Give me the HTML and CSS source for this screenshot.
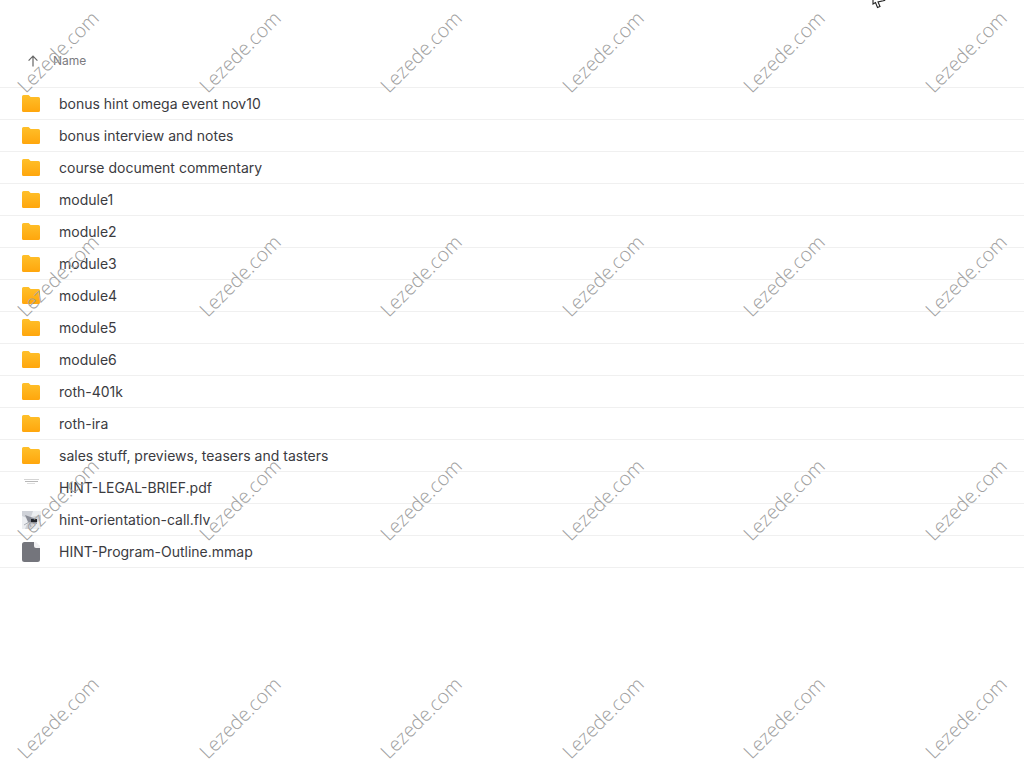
FILE: index.html
```html
<!DOCTYPE html>
<html lang="en">

<head>
    <meta charset="UTF-8">
    <meta name="viewport" content="width=device-width, initial-scale=1.0">
    <title>Files</title>
    <link rel="stylesheet" href="styles.css">
</head>

<body>
    <svg width="0" height="0" class="defs">
        <defs>
            <linearGradient id="fold" x1="0" y1="0" x2="0" y2="1">
                <stop offset="0" stop-color="#ffc02a" />
                <stop offset="1" stop-color="#ffa60d" />
            </linearGradient>
            <symbol id="folder" viewBox="0 0 18 17">
                <path d="M1.5 0H6.6L8.6 2H16.5A1.5 1.5 0 0 1 18 3.5V15.5A1.5 1.5 0 0 1 16.5 17H1.5A1.5 1.5 0 0 1 0 15.5V1.5A1.5 1.5 0 0 1 1.5 0Z" fill="url(#fold)" />
            </symbol>
        </defs>
    </svg>

    <div class="list">
        <div class="head">
            <svg class="sort" width="12" height="12" viewBox="0 0 12 12">
                <path d="M6 11.5V1.5M1.6 5.6L6 1.2L10.4 5.6" fill="none" stroke="#666" stroke-width="1.2" />
            </svg>
            <span>Name</span>
        </div>
        <div class="row"><svg class="ico"><use href="#folder" /></svg><span>bonus hint omega event nov10</span></div>
        <div class="row"><svg class="ico"><use href="#folder" /></svg><span>bonus interview and notes</span></div>
        <div class="row"><svg class="ico"><use href="#folder" /></svg><span>course document commentary</span></div>
        <div class="row"><svg class="ico"><use href="#folder" /></svg><span>module1</span></div>
        <div class="row"><svg class="ico"><use href="#folder" /></svg><span>module2</span></div>
        <div class="row"><svg class="ico"><use href="#folder" /></svg><span>module3</span></div>
        <div class="row"><svg class="ico"><use href="#folder" /></svg><span>module4</span></div>
        <div class="row"><svg class="ico"><use href="#folder" /></svg><span>module5</span></div>
        <div class="row"><svg class="ico"><use href="#folder" /></svg><span>module6</span></div>
        <div class="row"><svg class="ico"><use href="#folder" /></svg><span>roth-401k</span></div>
        <div class="row"><svg class="ico"><use href="#folder" /></svg><span>roth-ira</span></div>
        <div class="row"><svg class="ico"><use href="#folder" /></svg><span>sales stuff, previews, teasers and tasters</span></div>
        <div class="row">
            <svg class="ico" viewBox="0 0 18 17">
                <path d="M2 0.500H17" stroke="#d4d4d4" stroke-width="1" />
                <path d="M3 2.500H16" stroke="#b8b8b8" stroke-width="1" />
                <path d="M5 4.500H13" stroke="#dedede" stroke-width="1" />
            </svg>
            <span>HINT-LEGAL-BRIEF.pdf</span>
        </div>
        <div class="row">
            <svg class="ico thumb" viewBox="0 0 19 18">
                <rect width="19" height="18" fill="#cfd2d8" />
                <path d="M0 5L7 8L3 18H0ZM11 0L9 6L19 4V0ZM12 13L19 9V18H8Z" fill="#eceef1" />
                <path d="M3 4L14 8L15 13L6 11Z" fill="#8a8d96" />
                <rect x="9" y="8" width="6" height="3" fill="#23252b" />
                <path d="M2 14L7 11L9 16" fill="none" stroke="#a9acb4" stroke-width="1" />
            </svg>
            <span>hint-orientation-call.flv</span>
        </div>
        <div class="row">
            <svg class="ico doc" viewBox="0 0 18 20">
                <path d="M2.5 0H12L18 6V17.5A2.5 2.5 0 0 1 15.500 20H2.500A2.500 2.500 0 0 1 0 17.500V2.500A2.500 2.500 0 0 1 2.500 0Z" fill="#74757c" />
                <path d="M12 0H14L18 4V6H14A2 2 0 0 1 12 4Z" fill="#f0f0f2" />
            </svg>
            <span>HINT-Program-Outline.mmap</span>
        </div>
    </div>

    <div class="marks">
        <div class="marks-grid">
            <span>Lezede.com</span><span>Lezede.com</span><span>Lezede.com</span><span>Lezede.com</span><span>Lezede.com</span><span>Lezede.com</span>
            <span>Lezede.com</span><span>Lezede.com</span><span>Lezede.com</span><span>Lezede.com</span><span>Lezede.com</span><span>Lezede.com</span>
            <span>Lezede.com</span><span>Lezede.com</span><span>Lezede.com</span><span>Lezede.com</span><span>Lezede.com</span><span>Lezede.com</span>
            <span>Lezede.com</span><span>Lezede.com</span><span>Lezede.com</span><span>Lezede.com</span><span>Lezede.com</span><span>Lezede.com</span>
        </div>
    </div>

    <svg class="cursor" width="14" height="9" viewBox="0 0 14 9">
        <path d="M1 -4V4L3.500 2.500L5.500 7.500L8 6.500L6 2L12.500 0.500L5 -6Z" fill="#fff" stroke="#222" stroke-width="1.100" />
    </svg>
</body>

</html>
```

FILE: styles.css
```css
* {
    margin: 0;
    padding: 0;
    box-sizing: border-box;
}

html,
body {
    height: 768px;
    overflow: hidden;
}

body {
    position: relative;
    background: #fff;
    font-family: Inter, "Liberation Sans", sans-serif;
    color: #3b3b3f;
}

.defs {
    display: block;
    height: 0;
}

.list {
    padding-top: 48px;
}

.head {
    display: flex;
    align-items: center;
    height: 40px;
    padding: 0 0 14px 27px;
    border-bottom: 1px solid #f0f0f0;
    font-size: 12px;
    color: #7a7a7e;
}

.sort {
    margin-right: 14px;
}

.row {
    display: flex;
    align-items: center;
    height: 32px;
    padding-left: 22px;
    border-bottom: 1px solid #f0f0f0;
    font-size: 14px;
}

.ico {
    flex: none;
    width: 18px;
    height: 17px;
    margin-right: 19px;
}

.thumb {
    width: 19px;
    height: 18px;
    margin-right: 18px;
}

.doc {
    height: 20px;
}

.marks {
    position: absolute;
    left: 0;
    top: 0;
    width: 1024px;
    height: 768px;
    overflow: hidden;
    pointer-events: none;
}

.marks-grid {
    display: grid;
    grid-template-columns: repeat(6, 181.5px);
    grid-template-rows: 224px 224px 224px 212px;
    margin: -61px 0 0 -33px;
}

.marks span {
    align-self: center;
    justify-self: center;
    transform: rotate(-45deg);
    font-family: "Open Sans", "Liberation Sans", sans-serif;
    font-size: 19.5px;
    font-weight: 300;
    color: #a0a0a0;
    white-space: nowrap;
}

.cursor {
    position: absolute;
    left: 872px;
    top: 0;
}
```
